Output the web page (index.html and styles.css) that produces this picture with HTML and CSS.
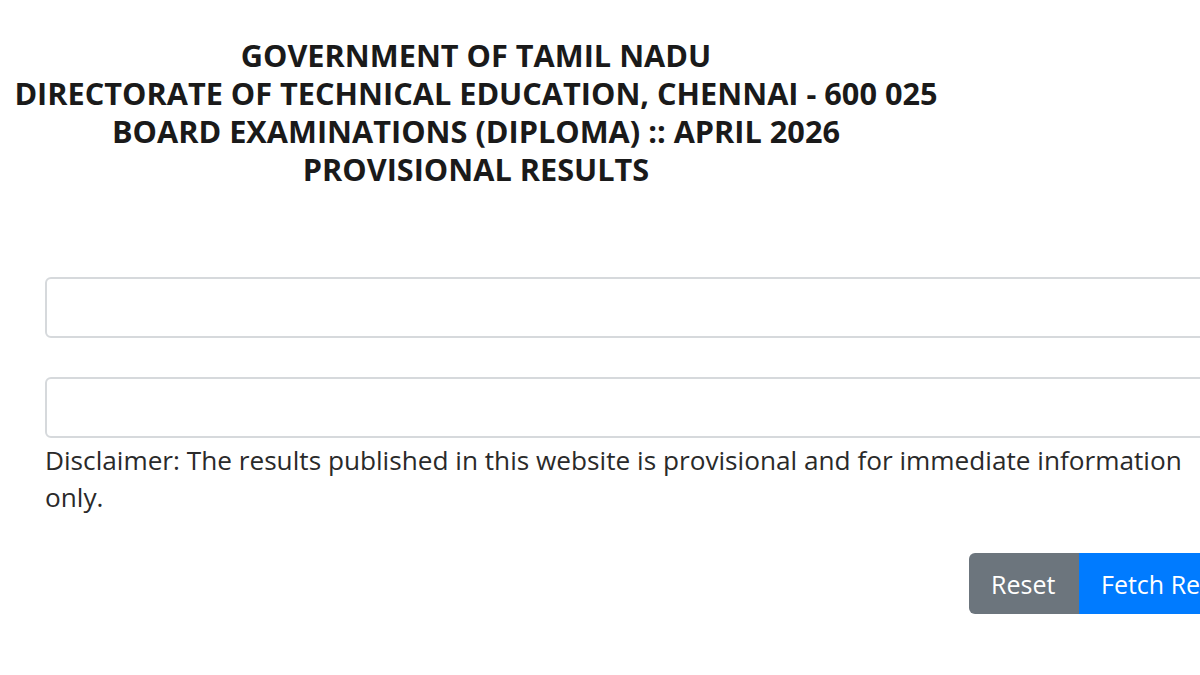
FILE: index.html
```html
<!DOCTYPE html>
<html>
<head>
<meta charset="utf-8">
<link rel="stylesheet" href="styles.css">
</head>
<body>
<div class="page">
  <header class="title">
    <div>GOVERNMENT OF TAMIL NADU</div>
    <div>DIRECTORATE OF TECHNICAL EDUCATION, CHENNAI - 600 025</div>
    <div>BOARD EXAMINATIONS (DIPLOMA) :: APRIL 2026</div>
    <div>PROVISIONAL RESULTS</div>
  </header>
  <form class="form">
    <input class="field" type="text">
    <input class="field second" type="text">
    <p class="disclaimer">Disclaimer: The results published in this website is provisional and for immediate information only.</p>
    <div class="actions">
      <button type="button" class="btn btn-reset">Reset</button>
      <button type="button" class="btn btn-fetch">Fetch Results</button>
    </div>
  </form>
</div>
</body>
</html>
```
FILE: styles.css
```css
html, body {
  margin: 0;
  padding: 0;
  background: #ffffff;
  overflow: hidden;
}
body {
  font-family: "Open Sans", "Noto Sans", sans-serif;
  color: #212529;
  width: 1200px;
  height: 675px;
}
.page {
  width: 1320px;
}
.title {
  width: 952px;
  text-align: center;
  font-weight: 700;
  font-size: 30.7px;
  line-height: 38px;
  color: #1a1a1a;
  padding-top: 36px;
}
.form {
  margin: 89px 0 0 45px;
  width: 1250px;
  display: flex;
  flex-direction: column;
}
.field {
  box-sizing: border-box;
  height: 61px;
  width: 100%;
  border: 2px solid #d6d9dc;
  border-radius: 6px;
  background: #fff;
  margin: 0;
  font-size: 24px;
}
.second {
  margin-top: 39px;
}
.disclaimer {
  margin: 4px 0 0 0;
  font-size: 26.2px;
  line-height: 37px;
  color: #2a2a2a;
  max-width: 1170px;
}
.actions {
  display: flex;
  justify-content: flex-end;
  margin-top: 37px;
}
.btn {
  height: 61px;
  border: none;
  color: #fff;
  font-family: "Open Sans", "Noto Sans", sans-serif;
  font-size: 25px;
  padding: 0 22px;
  margin: 0;
  text-align: left;
}
.btn-reset {
  background: #6c757d;
  border-radius: 6px 0 0 6px;
  width: 110px;
}
.btn-fetch {
  background: #007bff;
  border-radius: 0 6px 6px 0;
  width: 216px;
}
```
